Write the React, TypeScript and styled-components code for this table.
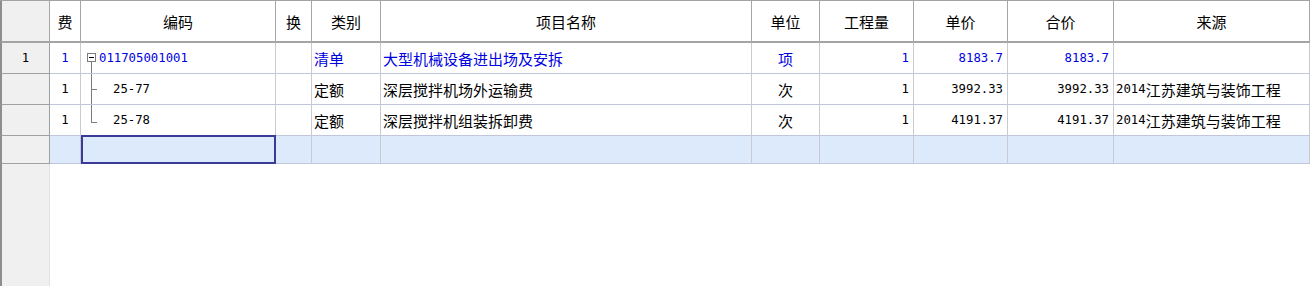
import styled, { createGlobalStyle } from 'styled-components'

const GlobalStyle = createGlobalStyle`
  html, body {
    margin: 0;
    padding: 0;
    background: #fff;
    overflow: hidden;
  }
  #root {
    height: 100vh;
  }
`

const CJK_FONT = '"Noto Sans CJK SC", "Noto Sans", sans-serif'
const NUM_FONT = '"DejaVu Sans Mono", "Liberation Mono", "Noto Sans CJK SC", monospace'
const BLUE = '#0000e0'
const COLUMNS = '50px 31px 195px 36px 69px 371px 68px 94px 94px 106px 196px'

type Align = 'left' | 'center' | 'right'
type Branch = 'root' | 'mid' | 'last'

const justify = (a?: Align) =>
  a === 'right' ? 'flex-end' : a === 'center' ? 'center' : 'flex-start'

const Sheet = styled.div`
  display: flex;
  flex-direction: column;
  height: 100vh;
  box-sizing: border-box;
  border-top: 1px solid #a3a3a3;
  font-family: ${CJK_FONT};
  font-size: 15px;
  color: #000;
`

const Grid = styled.div`
  display: grid;
  grid-template-columns: ${COLUMNS};
  grid-template-rows: 42px repeat(3, 31px) 28px;
`

const HeaderCell = styled.div<{ $corner?: boolean }>`
  box-sizing: border-box;
  display: flex;
  align-items: center;
  justify-content: center;
  background: ${(p) => (p.$corner ? '#f0f0f0' : '#fff')};
  border-right: 1px solid #a6a6a6;
  border-bottom: 2px solid #a4a4a4;
  border-left: ${(p) => (p.$corner ? '2px solid #8e8e8e' : 'none')};
  white-space: nowrap;
`

const RowHead = styled.div`
  box-sizing: border-box;
  display: flex;
  align-items: center;
  justify-content: center;
  background: #f0f0f0;
  border-left: 2px solid #8e8e8e;
  border-right: 1px solid #a0a0a0;
  border-bottom: 1px solid #a0a0a0;
  font-family: ${NUM_FONT};
  font-size: 12.3px;
`

const Cell = styled.div<{
  $align?: Align
  $blue?: boolean
  $mono?: boolean
  $blank?: boolean
  $selected?: boolean
}>`
  box-sizing: border-box;
  display: flex;
  align-items: center;
  justify-content: ${(p) => justify(p.$align)};
  padding: 0 ${(p) => (p.$align === 'right' ? '4px' : '2px')} 0 2px;
  background: ${(p) => (p.$blank ? '#dceafc' : '#fff')};
  border-right: 1px solid #c9c9d2;
  border-bottom: 1px solid #c2c6da;
  color: ${(p) => (p.$blue ? BLUE : '#000')};
  font-family: ${(p) => (p.$mono ? NUM_FONT : CJK_FONT)};
  font-size: ${(p) => (p.$mono ? '12.3px' : '15px')};
  white-space: nowrap;
  overflow: hidden;

  ${(p) =>
    p.$selected &&
    `
    border: 2px solid #3a3a98;
    margin: -1px 0 0 0;
  `}
`

const CodeCell = styled(Cell)`
  align-items: stretch;
  padding-left: 5px;
`

const CodeText = styled.span`
  align-self: center;
  margin-left: 1px;
`

// year prefix of the source name is set in the number face
const Year = styled.span`
  font-family: ${NUM_FONT};
  font-size: 12.3px;
`

const Filler = styled.div`
  flex: 1;
  display: grid;
  grid-template-columns: 50px 1fr;
`

const Gutter = styled.div`
  box-sizing: border-box;
  background: #f0f0f0;
  border-left: 2px solid #8e8e8e;
  border-right: 1px solid #e2e2e2;
`

// tree connector drawn to the left of each code
const TreeArt = ({ branch }: { branch: Branch }) => {
  const stroke = '#7c7c7c'
  if (branch === 'root') {
    return (
      <svg width='12' height='30' viewBox='0 0 12 30'>
        <rect x='1.5' y='10.5' width='8' height='8' fill='#fff' stroke={stroke} />
        <line x1='3' y1='14.5' x2='8' y2='14.5' stroke='#000' />
        <line x1='5.5' y1='19' x2='5.5' y2='30' stroke={stroke} />
      </svg>
    )
  }
  const foot = branch === 'mid' ? 15.5 : 17.5
  return (
    <svg width='26' height='30' viewBox='0 0 26 30'>
      <line x1='5.5' y1='0' x2='5.5' y2={branch === 'mid' ? 30 : foot} stroke={stroke} />
      <line x1='5' y1={foot} x2='11' y2={foot} stroke={stroke} />
    </svg>
  )
}

const headers = ['费', '编码', '换', '类别', '项目名称', '单位', '工程量', '单价', '合价', '来源']

const rows = [
  {
    no: '1',
    code: '011705001001',
    branch: 'root' as Branch,
    kind: '清单',
    name: '大型机械设备进出场及安拆',
    unit: '项',
    price: '8183.7',
    total: '8183.7',
    year: '',
    source: '',
    blue: true,
  },
  {
    no: '',
    code: '25-77',
    branch: 'mid' as Branch,
    kind: '定额',
    name: '深层搅拌机场外运输费',
    unit: '次',
    price: '3992.33',
    total: '3992.33',
    year: '2014',
    source: '江苏建筑与装饰工程',
    blue: false,
  },
  {
    no: '',
    code: '25-78',
    branch: 'last' as Branch,
    kind: '定额',
    name: '深层搅拌机组装拆卸费',
    unit: '次',
    price: '4191.37',
    total: '4191.37',
    year: '2014',
    source: '江苏建筑与装饰工程',
    blue: false,
  },
]

const Row = ({ row }: { row: (typeof rows)[number] }) => (
  <>
    <RowHead>{row.no}</RowHead>
    <Cell $align='center' $mono $blue={row.blue}>
      1
    </Cell>
    <CodeCell $mono $blue={row.blue}>
      <TreeArt branch={row.branch} />
      <CodeText>{row.code}</CodeText>
    </CodeCell>
    <Cell />
    <Cell $blue={row.blue}>{row.kind}</Cell>
    <Cell $blue={row.blue}>{row.name}</Cell>
    <Cell $align='center' $blue={row.blue}>
      {row.unit}
    </Cell>
    <Cell $align='right' $mono $blue={row.blue}>
      1
    </Cell>
    <Cell $align='right' $mono $blue={row.blue}>
      {row.price}
    </Cell>
    <Cell $align='right' $mono $blue={row.blue}>
      {row.total}
    </Cell>
    <Cell>
      <Year>{row.year}</Year>
      {row.source}
    </Cell>
  </>
)

export default function App() {
  return (
    <>
      <GlobalStyle />
      <Sheet>
        <Grid>
          <HeaderCell $corner />
          {headers.map((h) => (
            <HeaderCell key={h}>{h}</HeaderCell>
          ))}

          {rows.map((r) => (
            <Row key={r.code} row={r} />
          ))}

          <RowHead />
          <Cell $blank />
          <Cell $blank $selected />
          {Array.from({ length: 8 }).map((_, i) => (
            <Cell key={i} $blank />
          ))}
        </Grid>
        <Filler>
          <Gutter />
          <div />
        </Filler>
      </Sheet>
    </>
  )
}
